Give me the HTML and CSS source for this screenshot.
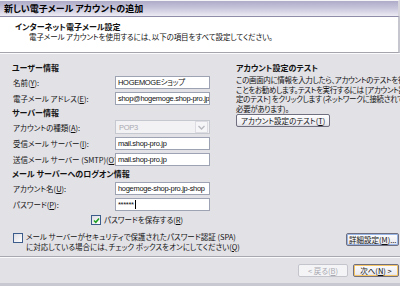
FILE: index.html
```html
<!DOCTYPE html>
<html lang="ja">
  <head>
    <meta charset="UTF-8" />
    <meta name="viewport" content="width=device-width, initial-scale=1.0" />
    <title>新しい電子メール アカウントの追加</title>
    <link rel="stylesheet" href="styles.css">
  </head>
  <body>
    <div class="window">
      <div class="titlebar">新しい電子メール アカウントの追加</div>
      <header class="header">
        <div class="header-title">インターネット電子メール設定</div>
        <div class="header-sub">電子メール アカウントを使用するには、以下の項目をすべて設定してください。</div>
      </header>
      <main class="content">
        <section class="left">
          <div class="group-title">ユーザー情報</div>
          <div class="row">
            <label>名前(<u>Y</u>):</label>
            <div class="field">HOGEMOGEショップ</div>
          </div>
          <div class="row">
            <label>電子メール アドレス(<u>E</u>):</label>
            <div class="field">shop@hogemoge.shop-pro.jp</div>
          </div>
          <div class="group-title">サーバー情報</div>
          <div class="row">
            <label>アカウントの種類(<u>A</u>):</label>
            <div class="field combo">
              <span>POP3</span>
              <span class="combo-btn">
                <svg width="7" height="5" viewBox="0 0 7 5"><path d="M0.5 1 L3.5 4 L6.5 1" fill="none" stroke="#b8b8c0" stroke-width="1.3"/></svg>
              </span>
            </div>
          </div>
          <div class="row">
            <label>受信メール サーバー(<u>I</u>):</label>
            <div class="field">mail.shop-pro.jp</div>
          </div>
          <div class="row">
            <label>送信メール サーバー (SMTP)(<u>O</u>):</label>
            <div class="field">mail.shop-pro.jp</div>
          </div>
          <div class="group-title">メール サーバーへのログオン情報</div>
          <div class="row">
            <label>アカウント名(<u>U</u>):</label>
            <div class="field">hogemoge-shop-pro.jp-shop</div>
          </div>
          <div class="row">
            <label>パスワード(<u>P</u>):</label>
            <div class="field">******<span class="caret"></span></div>
          </div>
          <div class="check-row save">
            <span class="checkbox checked">
              <svg width="7" height="7" viewBox="0 0 7 7"><path d="M1 3.5 L2.8 5.3 L6 1.5" fill="none" stroke="#21a121" stroke-width="1.6"/></svg>
            </span>
            <span>パスワードを保存する(<u>R</u>)</span>
          </div>
          <div class="check-row spa">
            <span class="checkbox"></span>
            <span>メール サーバーがセキュリティで保護されたパスワード認証 (SPA)<br>に対応している場合には、チェック ボックスをオンにしてください(<u>Q</u>)</span>
          </div>
        </section>
        <section class="right">
          <div class="group-title">アカウント設定のテスト</div>
          <p class="note">この画面内に情報を入力したら、アカウントのテストを行う<br>ことをお勧めします。テストを実行するには [アカウント設<br>定のテスト] をクリックします (ネットワークに接続されている<br>必要があります)。</p>
          <button class="btn test-btn">アカウント設定のテスト(<u>T</u>)</button>
          <div class="spacer"></div>
          <button class="btn detail-btn">詳細設定(<u>M</u>)...</button>
        </section>
      </main>
      <footer class="footer">
        <button class="btn back-btn" disabled>&lt; 戻る(<u>B</u>)</button>
        <button class="btn next-btn">次へ(<u>N</u>) &gt;</button>
      </footer>
    </div>
  </body>
</html>
```

FILE: styles.css
```css
body {
  margin: 0;
  background: #e2e1e6;
  font-family: "Noto Sans CJK JP", "Noto Sans", sans-serif;
  font-size: 7.5px;
  font-feature-settings: "palt";
  color: #111;
}
.window {
  width: 400px;
  height: 286px;
  overflow: hidden;
  background: #e2e1e6;
  display: flex;
  flex-direction: column;
}
.titlebar {
  height: 15px;
  line-height: 15px;
  padding-left: 4px;
  font-size: 9px;
  font-weight: bold;
  color: #000;
  white-space: nowrap;
  border-top: 1px solid #f4f4f6;
  border-bottom: 1px solid #8e8ca8;
  border-right: 2px solid #d6d6dc;
  background: linear-gradient(#aeabc9, #c9c7dc 50%, #ecebf3);
}
.header {
  height: 35px;
  background: #fff;
  border-right: 2px solid #c6c6ce;
  border-bottom: 1px solid #a4a4ac;
  box-shadow: 0 1px 0 #fbfbfd;
  white-space: nowrap;
}
.header-title {
  font-weight: bold;
  font-size: 8px;
  padding: 5px 0 0 15px;
  line-height: 10px;
}
.header-sub {
  padding-left: 29px;
  line-height: 9px;
  letter-spacing: -0.1px;
}
.content {
  flex: 1;
  display: flex;
  padding: 8px 0 0 12px;
}
.left {
  width: 224px;
  flex-shrink: 0;
}
.group-title {
  font-weight: bold;
  font-size: 8px;
  height: 13px;
  line-height: 13px;
  white-space: nowrap;
}
.row {
  display: flex;
  align-items: center;
  height: 16px;
  padding-left: 1px;
}
.row label {
  width: 102px;
  white-space: nowrap;
}
.field {
  width: 91px;
  height: 11px;
  line-height: 11px;
  padding-left: 2px;
  background: #fff;
  border: 1px solid #9ea3b4;
  white-space: nowrap;
  overflow: hidden;
  display: flex;
  align-items: center;
  font-family: "Liberation Sans", "Noto Sans CJK JP", sans-serif;
  letter-spacing: -0.3px;
}
.combo {
  height: 12px;
  background: #f2f2f4;
  border-color: #c6c8d0;
  color: #a8a8b0;
  justify-content: space-between;
  padding-left: 3px;
  width: 90px;
}
.combo-btn {
  width: 11px;
  height: 10px;
  margin-right: 1px;
  background: #f6f6f8;
  border: 1px solid #dcdce2;
  display: flex;
  align-items: center;
  justify-content: center;
}
.caret {
  display: inline-block;
  width: 1px;
  height: 9px;
  background: #000;
  margin-left: 1px;
}
.check-row {
  display: flex;
  white-space: nowrap;
  line-height: 9.5px;
}
.checkbox {
  width: 8px;
  height: 8px;
  border: 1px solid #3c5c8c;
  background: linear-gradient(135deg, #dcdce4, #fff);
  display: flex;
  align-items: center;
  justify-content: center;
  flex-shrink: 0;
  margin-right: 3px;
}
.save {
  padding-left: 79px;
  margin-top: 3px;
  align-items: center;
}
.spa {
  margin-top: 7px;
  padding-left: 1px;
}
.spa .checkbox {
  margin-top: 0.5px;
}
.right {
  flex: 1;
  min-width: 0;
  display: flex;
  flex-direction: column;
  align-items: flex-start;
}
.note {
  margin: 1px 0 0;
  line-height: 9.5px;
  white-space: nowrap;
  letter-spacing: -0.35px;
}
.btn {
  font-family: inherit;
  font-size: 7.5px;
  font-feature-settings: "palt";
  color: #111;
  background: linear-gradient(#fdfdfe, #ececf1 80%, #d8d8de);
  border: 1px solid #6f6f80;
  border-radius: 2px;
  height: 13px;
  padding: 0 4px;
  line-height: 10px;
  white-space: nowrap;
}
.test-btn {
  margin-top: 1px;
}
.spacer {
  flex: 1;
}
.detail-btn {
  margin: 0 0 10px 110px;
  width: 53px;
  padding: 0 2px;
  box-shadow: inset 0 0 0 1px #98b4e4;
}
.footer {
  border-top: 1px solid #a8a8b0;
  box-shadow: inset 0 1px 0 #fafafc;
  border-bottom: 3px solid #c8c8d0;
  display: flex;
  justify-content: flex-end;
  align-items: flex-start;
  padding-top: 7px;
  gap: 5px;
  box-sizing: border-box;
  height: 30px;
}
.back-btn {
  width: 50px;
  color: #a8a8b0;
  border-color: #c4c4cc;
  background: #f4f4f6;
}
.next-btn {
  width: 46px;
  margin-right: 1px;
  box-shadow: inset 0 0 0 1px #f6c666;
}
```
